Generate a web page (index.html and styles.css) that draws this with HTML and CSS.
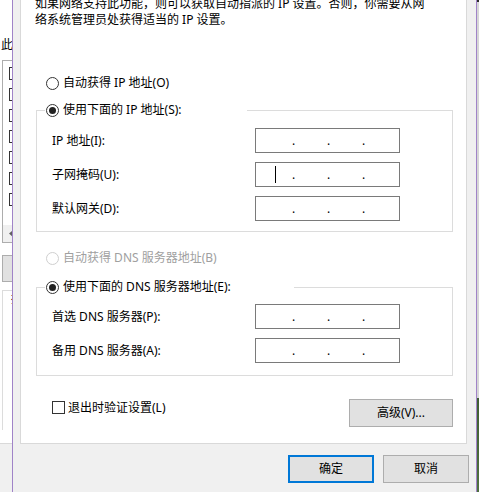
FILE: index.html
```html
<!DOCTYPE html>
<html lang="zh-CN">
<head>
    <meta charset="UTF-8">
    <title>Internet 协议版本 4 (TCP/IPv4) 属性</title>
    <link rel="stylesheet" href="styles.css">
</head>
<body>
    <div class="screen">
        <!-- 后面那个网络属性窗口，只露出一条边 -->
        <div class="behind">
            <div class="behind-page">
                <div class="behind-caption">此连接使用下列项目(O):</div>
                <div class="behind-list">
                    <span class="bl-item on"></span>
                    <span class="bl-item on"></span>
                    <span class="bl-item on"></span>
                    <span class="bl-item"></span>
                    <span class="bl-item on"></span>
                    <span class="bl-item on"></span>
                    <span class="bl-item on"></span>
                    <div class="bl-scroll">
                        <svg width="5" height="7" viewBox="0 0 5 7"><polygon points="4,0 0,3.5 4,7" fill="#606060"/></svg>
                    </div>
                </div>
                <div class="behind-btn"></div>
                <div class="behind-group"><span>描述</span></div>
            </div>
        </div>

        <div class="dialog">
            <div class="tab-panel">
                <p class="intro">如果网络支持此功能，则可以获取自动指派的 IP 设置。否则，你需要从网络系统管理员处获得适当的 IP 设置。</p>

                <label class="radio-row radio-first"><span class="radio"></span>自动获得 IP 地址(O)</label>

                <fieldset class="group group-ip">
                    <legend class="legend-ip"><span class="legend-in"><span class="radio checked"></span>使用下面的 IP 地址(S):</span></legend>
                    <div class="group-body">
                        <div class="field-row">
                            <label>IP 地址(I):</label>
                            <div class="ipbox"><span class="octet"></span><span class="dot">.</span><span class="octet"></span><span class="dot">.</span><span class="octet"></span><span class="dot">.</span><span class="octet"></span></div>
                        </div>
                        <div class="field-row">
                            <label>子网掩码(U):</label>
                            <div class="ipbox"><span class="octet"><span class="caret"></span></span><span class="dot">.</span><span class="octet"></span><span class="dot">.</span><span class="octet"></span><span class="dot">.</span><span class="octet"></span></div>
                        </div>
                        <div class="field-row">
                            <label>默认网关(D):</label>
                            <div class="ipbox"><span class="octet"></span><span class="dot">.</span><span class="octet"></span><span class="dot">.</span><span class="octet"></span><span class="dot">.</span><span class="octet"></span></div>
                        </div>
                    </div>
                </fieldset>

                <label class="radio-row radio-dns disabled"><span class="radio"></span>自动获得 DNS 服务器地址(B)</label>

                <fieldset class="group group-dns">
                    <legend class="legend-dns"><span class="legend-in"><span class="radio checked"></span>使用下面的 DNS 服务器地址(E):</span></legend>
                    <div class="group-body">
                        <div class="field-row">
                            <label>首选 DNS 服务器(P):</label>
                            <div class="ipbox"><span class="octet"></span><span class="dot">.</span><span class="octet"></span><span class="dot">.</span><span class="octet"></span><span class="dot">.</span><span class="octet"></span></div>
                        </div>
                        <div class="field-row">
                            <label>备用 DNS 服务器(A):</label>
                            <div class="ipbox"><span class="octet"></span><span class="dot">.</span><span class="octet"></span><span class="dot">.</span><span class="octet"></span><span class="dot">.</span><span class="octet"></span></div>
                        </div>
                    </div>
                </fieldset>

                <div class="panel-foot">
                    <label class="check-row"><span class="checkbox"></span>退出时验证设置(L)</label>
                    <button class="btn btn-adv">高级(V)...</button>
                </div>
            </div>

            <div class="dialog-buttons">
                <button class="btn btn-default">确定</button>
                <button class="btn">取消</button>
            </div>
        </div>

        <div class="edge"></div>
    </div>
</body>
</html>
```

FILE: styles.css
```css
* {
    box-sizing: border-box;
}
body {
    margin: 0;
    font-family: "Noto Sans", "Noto Sans CJK SC", sans-serif;
    font-size: 12px;
    line-height: 16px;
    color: #000;
    overflow: hidden;
}
.screen {
    display: flex;
    width: 479px;
    height: 492px;
    overflow: hidden;
}

/* 后面的窗口 */
.behind {
    width: 12px;
    flex: none;
    overflow: hidden;
    background: #f0f0f0;
}
.behind-page {
    width: 60px;
    height: 444px;
    background: #fff;
    border-bottom: 1px solid #d9d9d9;
    display: flex;
    flex-direction: column;
}
.behind-caption {
    margin-top: 38px;
    line-height: 14px;
    white-space: nowrap;
    padding-left: 1px;
}
.behind-list {
    margin: 8px 0 0 2px;
    width: 50px;
    height: 183px;
    border: 1px solid #adadad;
    padding-top: 6px;
    display: flex;
    flex-direction: column;
    gap: 8px;
}
.bl-item {
    display: block;
    margin-left: 6px;
    width: 13px;
    height: 13px;
    border: 1px solid #333;
    background: #fff;
}
.bl-item.on {
    background: #333;
    box-shadow: inset 0 0 0 2px #fff;
}
.bl-scroll {
    margin-top: auto;
    height: 17px;
    background: #f0f0f0;
    display: flex;
    align-items: center;
    padding-left: 6px;
}
.behind-btn {
    margin: 12px 0 0 2px;
    width: 50px;
    height: 27px;
    background: #e1e1e1;
    border: 1px solid #adadad;
}
.behind-group {
    margin: 8px 0 0 2px;
    height: 140px;
    border-top: 1px solid #dcdcdc;
    border-left: 1px solid #dcdcdc;
}
.behind-group span {
    display: inline-block;
    margin: -8px 0 0 6px;
    padding: 0 2px;
    background: #fff;
}

/* 对话框 */
.dialog {
    width: 465px;
    flex: none;
    background: #f0f0f0;
    border-left: 1px solid #a083c8;
    border-right: 1px solid #a083c8;
    padding-left: 7px;
}
.edge {
    width: 2px;
    flex: none;
    background: linear-gradient(#2b2b2b 0, #2b2b2b 2px, #d6d6d6 2px, #d6d6d6 398px, #3f5e33 398px, #4f7040 100%);
}
.tab-panel {
    width: 447px;
    margin-top: -20px;
    padding: 15px 0 16px;
    background: #fff;
    border: 1px solid #d9d9d9;
}
.intro {
    margin: 0 0 0 14px;
    width: 396px;
}
.radio-row {
    display: flex;
    align-items: center;
    gap: 4px;
    height: 16px;
    margin-left: 25px;
}
.radio-first {
    margin-top: 47px;
}
.radio-dns {
    margin-top: 18px;
}
.radio {
    display: flex;
    align-items: center;
    justify-content: center;
    flex: none;
    width: 13px;
    height: 13px;
    border: 1px solid #333;
    border-radius: 50%;
    background: #fff;
}
.radio.checked::after {
    content: "";
    width: 7px;
    height: 7px;
    border-radius: 50%;
    background: #222;
}
.disabled {
    color: #a0a0a0;
}
.disabled .radio {
    border-color: #cfcfcf;
}

.group {
    margin: 11px 0 0 15px;
    padding: 0;
    width: 417px;
    min-width: 0;
    border: 1px solid #dcdcdc;
}
.group-dns {
    margin-top: 13px;
}
.group legend {
    margin-left: 8px;
    padding: 0 0 0 1px;
    height: 16px;
}
.legend-in {
    display: flex;
    align-items: center;
    gap: 4px;
    height: 16px;
}
.legend-ip {
    width: 202px;
}
.legend-dns {
    width: 249px;
}
.group-body {
    display: flex;
    flex-direction: column;
    gap: 9px;
    padding: 10px 0 10px 15px;
}
.group-dns .group-body {
    padding: 9px 0 12px 15px;
}
.field-row {
    display: flex;
    align-items: center;
}
.field-row label {
    width: 203px;
}
.ipbox {
    display: flex;
    width: 145px;
    height: 25px;
    border: 1px solid #7a7a7a;
    background: #fff;
    padding-left: 4px;
}
.octet {
    width: 32px;
    display: flex;
    align-items: center;
}
.dot {
    width: 3px;
    line-height: 23px;
}
.caret {
    margin-left: 15px;
    width: 1px;
    height: 17px;
    background: #000;
}

.panel-foot {
    display: flex;
    justify-content: space-between;
    align-items: flex-start;
    margin: 23px 0 0 31px;
    width: 401px;
}
.check-row {
    display: flex;
    align-items: center;
    gap: 3px;
    margin-top: 2px;
    line-height: 13px;
}
.checkbox {
    width: 13px;
    height: 13px;
    border: 1px solid #333;
    background: #fff;
}
.btn {
    font: inherit;
    color: #000;
    width: 86px;
    height: 28px;
    padding: 0;
    background: #e1e1e1;
    border: 1px solid #adadad;
}
.btn-adv {
    width: 104px;
}
.btn-default {
    border: 2px solid #0078d7;
}
.dialog-buttons {
    display: flex;
    justify-content: flex-end;
    gap: 9px;
    margin-top: 11px;
    padding-right: 7px;
}
```
